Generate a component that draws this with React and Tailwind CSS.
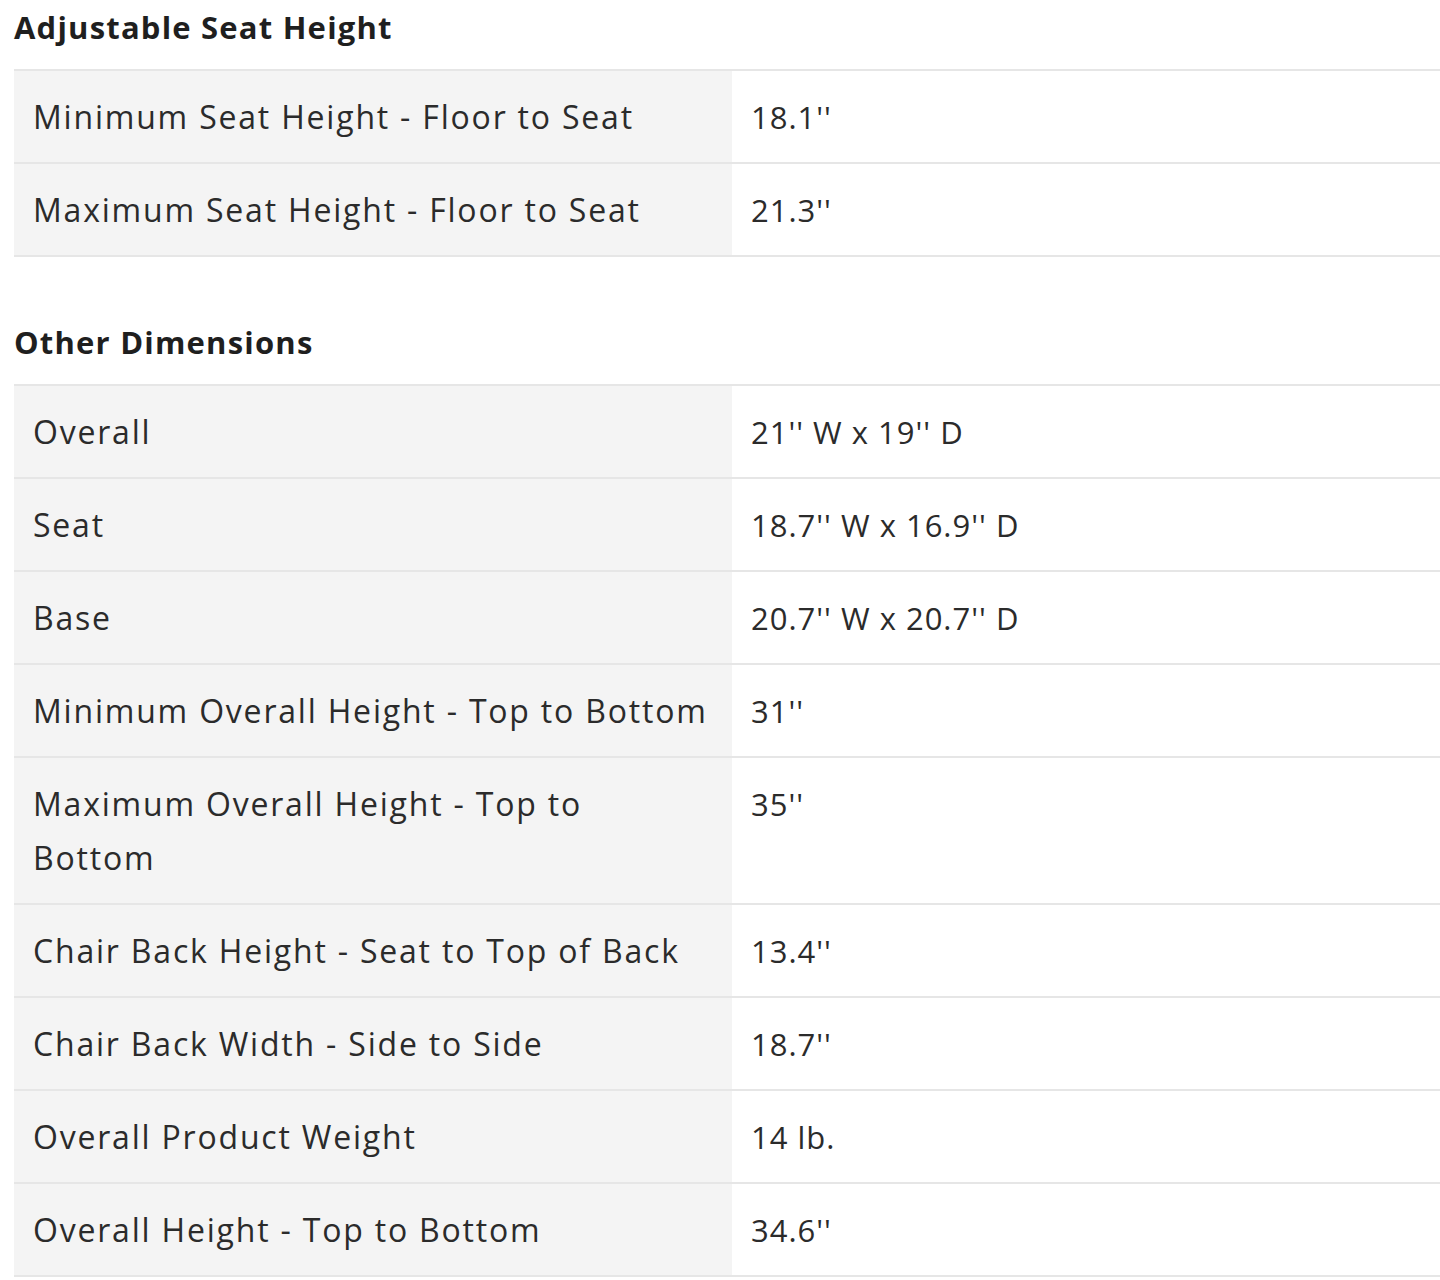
import React from "react";

const sections = [
  {
    title: "Adjustable Seat Height",
    rows: [
      ["Minimum Seat Height - Floor to Seat", "18.1''"],
      ["Maximum Seat Height - Floor to Seat", "21.3''"],
    ],
  },
  {
    title: "Other Dimensions",
    rows: [
      ["Overall", "21'' W x 19'' D"],
      ["Seat", "18.7'' W x 16.9'' D"],
      ["Base", "20.7'' W x 20.7'' D"],
      ["Minimum Overall Height - Top to Bottom", "31''"],
      ["Maximum Overall Height - Top to Bottom", "35''"],
      ["Chair Back Height - Seat to Top of Back", "13.4''"],
      ["Chair Back Width - Side to Side", "18.7''"],
      ["Overall Product Weight", "14 lb."],
      ["Overall Height - Top to Bottom", "34.6''"],
    ],
  },
];

function Section({ title, rows, first }) {
  return (
    <div className={first ? "pt-[7px]" : "mt-[65px]"}>
      <h2 className="pl-[14px] text-[31px] leading-[40px] font-bold tracking-[1.2px] text-[#1f1f1f] mb-[22px]">
        {title}
      </h2>
      <div className="ml-[14px] border-t-2 border-[#e6e6e6]">
        {rows.map(([label, value]) => (
          <div
            key={label}
            className="grid grid-cols-[718px_1fr] border-b-2 border-[#e6e6e6]"
          >
            <div className="bg-[#f4f4f4] pl-[19px] pr-[22px] pt-[19px] pb-[18px] text-[32px] leading-[54px] tracking-[1.8px] text-[#2b2b2b]">
              {label}
            </div>
            <div className="bg-white pl-[19px] pr-[14px] pt-[19px] pb-[18px] text-[31px] leading-[54px] tracking-[1px] text-[#2b2b2b]">
              {value}
            </div>
          </div>
        ))}
      </div>
    </div>
  );
}

export default function App() {
  return (
    <div
      className="w-[1440px] min-h-[1280px] bg-white overflow-hidden"
      style={{ fontFamily: "'Open Sans', Lato, sans-serif" }}
    >
      {sections.map((s, i) => (
        <Section key={s.title} {...s} first={i === 0} />
      ))}
    </div>
  );
}
